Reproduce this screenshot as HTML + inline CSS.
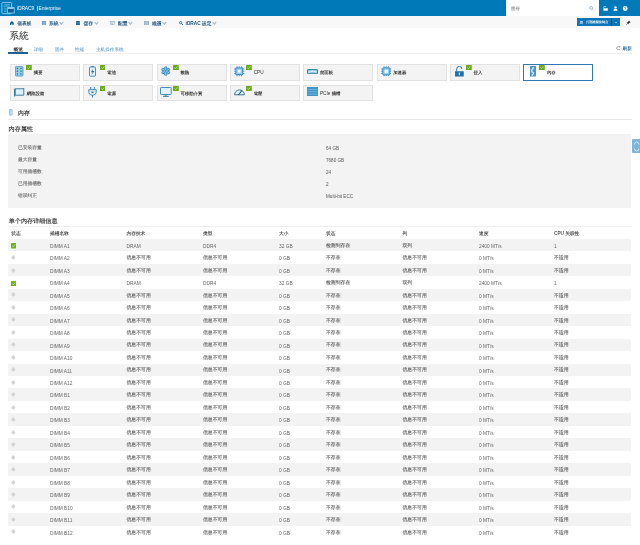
<!DOCTYPE html>
<html><head><meta charset="utf-8">
<style>
*{margin:0;padding:0;box-sizing:border-box}
html,body{width:640px;height:545px;overflow:hidden;background:#fff;font-family:"Liberation Sans",sans-serif;color:#444;position:relative}
.a{position:absolute;white-space:nowrap}
#hdr{position:absolute;left:0;top:0;width:640px;height:16px;background:#0079b8}
#nav{position:absolute;left:0;top:16px;width:640px;height:12.3px;background:#f8f8f8}
.brand{position:absolute;left:17px;top:5.3px;font-size:5px;color:#f0f6fb;line-height:7px}
.nv{position:absolute;top:20.6px;font-size:4.75px;line-height:6px;color:#1a5080;font-weight:bold}
.nv .k{font-weight:bold;color:#2a5c88}
.chev{display:inline-block;width:2.8px;height:2.8px;border-right:.4px solid #9fb5c9;border-bottom:.4px solid #9fb5c9;transform:rotate(45deg);margin-left:1.6px;position:relative;top:-1.2px}
#search{position:absolute;left:506px;top:0;width:93px;height:16px;background:#fff}
.title{position:absolute;left:9.3px;top:29.6px;font-size:9.75px;line-height:12px;color:#2a2a2a}
.tab{position:absolute;top:47px;font-size:4.6px;line-height:6px;color:#3d87c2}
.card{position:absolute;width:70px;height:16.3px;background:#f3f3f3;border:.7px solid #e2e2e2}
.card.sel{background:#fff;border:1.2px solid #3079b5}
.ci{position:absolute;line-height:0}
.ci svg{display:block}
.cl{position:absolute;font-size:4.7px;line-height:6px;color:#333;white-space:nowrap}
.cl .k{font-weight:bold;color:#383838;font-size:4.4px;position:relative;top:.2px}
.sec{position:absolute;font-size:5.9px;line-height:8px;color:#333;font-weight:bold}
.bold{font-weight:bold;font-size:6.1px;color:#444}
#props{position:absolute;left:8px;top:134.2px;width:622.8px;height:73.4px;background:#f3f3f3}
.pl{position:absolute;left:18px;margin-top:-.7px;font-size:4.75px;line-height:6px;color:#808080;font-weight:bold}
.pv{position:absolute;left:326px;font-size:4.6px;line-height:6px;color:#555}
.tr{position:absolute;left:8px;width:623px;height:12.47px}
.tr.st{background:#f3f3f3}
.tr>span{position:absolute;top:5px;font-size:4.8px;line-height:6px;color:#666}
.tr>span.z{color:#6e6e6e;font-weight:bold}
.th{position:absolute;top:230.6px;font-size:4.7px;line-height:6px;color:#555;font-weight:bold}
.c0{left:3px}.c1{left:42px}.c2{left:118.5px}.c3{left:195px}.c4{left:271px}.c5{left:318px}.c6{left:394.5px}.c7{left:471px}.c8{left:546px}
.k{font-size:100%;text-rendering:geometricPrecision}
.tr .k{font-size:4.85px;position:relative;top:-1.1px}
.pv .k{font-size:105%;position:relative;top:-.7px}
</style></head><body><div id="root" style="position:absolute;left:0;top:0;width:640px;height:545px;overflow:hidden;background:#fff;will-change:transform">
<div id="hdr"></div>
<svg class="a" style="left:1px;top:2px" width="14" height="12.5" viewBox="0 0 140 125"><rect x="9" y="4" width="97" height="113" rx="10" fill="none" stroke="#8fd6f6" stroke-width="9"/><path d="M28 28H86M28 42H86" stroke="#7fcdf0" stroke-width="7"/><path d="M28 62H56M28 78H56M28 94H56" stroke="#6cc0ea" stroke-width="7"/><rect x="66" y="56" width="66" height="54" fill="#105f92" stroke="#8fd6f6" stroke-width="8"/><path d="M70 63H128" stroke="#c9efff" stroke-width="9"/></svg>
<div class="brand" style="letter-spacing:-.17px">iDRAC9</div><div class="a" style="left:37.2px;top:5.7px;width:.6px;height:5.6px;background:#a9cfe8"></div><div class="brand" style="left:38.6px;letter-spacing:-.08px">Enterprise</div>
<div id="search"></div>
<div class="a" style="left:511px;top:6.1px;font-size:4.4px;line-height:6px;color:#9a9a9a;font-weight:bold"><span class="k">搜尋</span></div>
<svg class="a" style="left:589.2px;top:5.8px" width="5.2" height="4.6" viewBox="0 0 52 46"><circle cx="21" cy="19" r="14" fill="none" stroke="#8aa9c0" stroke-width="8"/><path d="M32 30L47 44" stroke="#8aa9c0" stroke-width="9"/></svg>
<svg class="a" style="left:602.5px;top:5.8px" width="25" height="5" viewBox="0 0 250 50"><path d="M8 22V12A10 10 0 0 1 28 12" stroke="#fff" stroke-width="6" fill="none"/><rect x="4" y="22" width="44" height="26" rx="3" fill="#fff"/><circle cx="125" cy="14" r="12" fill="#fff"/><path d="M104 48Q104 28 125 28Q146 28 146 48z" fill="#fff"/><circle cx="222" cy="25" r="24" fill="#fff"/><path d="M214 18Q214 10 222 10Q230 10 230 18Q230 24 222 26V31" stroke="#0079b8" stroke-width="6" fill="none"/><rect x="219" y="35" width="6" height="6" fill="#0079b8"/></svg>
<div id="nav"></div>
<svg class="a" style="left:10.2px;top:21.2px" width="3.8" height="4.2" viewBox="0 0 38 42"><path d="M19 0L38 17V42H24V28H14V42H0V17z" fill="#14628f"/></svg>
<div class="nv" style="left:17.3px"><span class="k">儀表板</span></div>
<svg class="a" style="left:42px;top:21px" width="4.2" height="4.4" viewBox="0 0 42 44"><path d="M0 0H42V44H0z" fill="#5d8fb8"/><path d="M6 10H36M6 22H36M6 34H36" stroke="#dfe9f2" stroke-width="5"/></svg>
<div class="nv" style="left:49px"><span class="k">系統</span><span class="chev"></span></div>
<svg class="a" style="left:75.9px;top:20.9px" width="3.9" height="4.3" viewBox="0 0 39 43"><rect x="0" y="0" width="39" height="43" rx="6" fill="#14628f"/><path d="M0 15H39M0 28H39" stroke="#9cc3dc" stroke-width="3"/></svg>
<div class="nv" style="left:83.5px"><span class="k">儲存</span><span class="chev"></span></div>
<svg class="a" style="left:110.2px;top:21px" width="4.8" height="4.3" viewBox="0 0 48 43"><rect x="2" y="2" width="44" height="30" fill="none" stroke="#7b9fbf" stroke-width="5"/><path d="M24 32V42M12 41H36" stroke="#7b9fbf" stroke-width="5"/><path d="M10 12H38M10 22H30" stroke="#7b9fbf" stroke-width="5"/></svg>
<div class="nv" style="left:118px"><span class="k">配置</span><span class="chev"></span></div>
<svg class="a" style="left:144.4px;top:21px" width="5" height="4.2" viewBox="0 0 50 42"><rect x="0" y="0" width="50" height="42" fill="#8aaac7"/><path d="M6 10H44M6 21H44M6 32H44" stroke="#e4edf5" stroke-width="5"/></svg>
<div class="nv" style="left:152px"><span class="k">維護</span><span class="chev"></span></div>
<svg class="a" style="left:178.7px;top:20.9px" width="4.4" height="4.4" viewBox="0 0 44 44"><circle cx="17" cy="17" r="12" fill="none" stroke="#14628f" stroke-width="8"/><path d="M26 26L41 41" stroke="#14628f" stroke-width="9"/></svg>
<div class="nv" style="left:185.6px">iDRAC <span class="k">設定</span><span class="chev"></span></div>
<div class="a" style="left:576.7px;top:18.3px;width:43.4px;height:8.2px;background:#0e75b8"></div>
<div class="a" style="left:610.9px;top:18.3px;width:.5px;height:8.2px;background:#0a5a90"></div>
<svg class="a" style="left:580px;top:21px" width="3.4" height="3.3" viewBox="0 0 34 33"><rect x="0" y="0" width="34" height="33" fill="#cfe4f3"/><path d="M5 9H29M5 17H29M5 25H29" stroke="#0e75b8" stroke-width="4"/></svg>
<div class="a" style="left:586.3px;top:20px;font-size:3.15px;line-height:5px;color:#e3eff8;font-weight:bold"><span class="k">打開虛擬控制台</span></div>
<svg class="a" style="left:614.6px;top:21.8px" width="2.2" height="1.6" viewBox="0 0 22 16"><path d="M0 2H22L11 15z" fill="#e3eff8"/></svg>
<svg class="a" style="left:625.8px;top:20.4px" width="5" height="5" viewBox="0 0 50 50"><path d="M28 4L46 22L38 24L26 36L24 44L6 26L14 24L26 12z" fill="#222"/><path d="M14 36L2 48" stroke="#222" stroke-width="5"/></svg>
<div class="title"><span class="k">系統</span></div>
<div class="tab" style="left:13.6px;color:#333;font-weight:bold"><span class="k">概览</span></div>
<div class="a" style="left:8px;top:52.2px;width:20px;height:1.8px;background:#1b5f94"></div>
<div class="a" style="left:28px;top:53.4px;width:604px;height:.5px;background:#f0f0f0"></div>
<div class="tab" style="left:33.7px"><span class="k">详细</span></div>
<div class="tab" style="left:55px"><span class="k">固件</span></div>
<div class="tab" style="left:75px"><span class="k">性能</span></div>
<div class="tab" style="left:96px"><span class="k">主机操作系统</span></div>
<svg class="a" style="left:616.2px;top:45.8px" width="4.6" height="4.2" viewBox="0 0 46 42"><path d="M38 12A17 17 0 1 0 40 28" stroke="#666" stroke-width="6" fill="none"/><path d="M30 2L44 4L40 17z" fill="#666"/></svg>
<div class="tab" style="left:622.6px;margin-top:-1.4px;color:#3f78a8;font-weight:bold"><span class="k">刷新</span></div>
<div class="card" style="left:10.00px;top:64.40px"></div>
<span class="ci" style="left:15.20px;top:66.20px"><svg width="8.4" height="10.5" viewBox="0 0 84 105"><rect x="4" y="4" width="76" height="97" rx="8" fill="#92cdec" stroke="#4c8fbd" stroke-width="8"/><g fill="#1f5f8c"><circle cx="24" cy="25" r="7"/><circle cx="60" cy="25" r="7"/><circle cx="24" cy="52" r="7"/><circle cx="60" cy="52" r="7"/><circle cx="24" cy="79" r="7"/><circle cx="60" cy="79" r="7"/></g></svg></span>
<span class="ci" style="left:26.20px;top:65.05px"><svg width="5.8" height="5.1" viewBox="0 0 58 51"><rect x="0" y="0" width="58" height="51" rx="4" fill="#6aa81c"/><path d="M15 27L25 36L43 15" stroke="#cdeea0" stroke-width="8" fill="none"/></svg></span>
<span class="cl" style="left:33.80px;top:70.00px"><span class="k">摘要</span></span>
<div class="card" style="left:83.30px;top:64.40px"></div>
<span class="ci" style="left:89.00px;top:66.00px"><svg width="7" height="10.75" viewBox="0 0 70 107.5"><rect x="22" y="0" width="26" height="10" fill="#3a82b3"/><rect x="5" y="10" width="60" height="92" rx="8" fill="#e4f3fb" stroke="#3a82b3" stroke-width="9"/><path d="M44 24L20 62H36L28 90L52 50H36z" fill="#1d5f8f"/></svg></span>
<span class="ci" style="left:99.50px;top:65.05px"><svg width="5.8" height="5.1" viewBox="0 0 58 51"><rect x="0" y="0" width="58" height="51" rx="4" fill="#6aa81c"/><path d="M15 27L25 36L43 15" stroke="#cdeea0" stroke-width="8" fill="none"/></svg></span>
<span class="cl" style="left:107.10px;top:70.00px"><span class="k">電池</span></span>
<div class="card" style="left:156.60px;top:64.40px"></div>
<span class="ci" style="left:161.00px;top:66.25px"><svg width="9.5" height="10" viewBox="0 0 95 100"><g fill="#3b8cc2"><circle cx="47.5" cy="18" r="16"/><circle cx="47.5" cy="82" r="16"/><circle cx="19.8" cy="34" r="16"/><circle cx="75.2" cy="34" r="16"/><circle cx="19.8" cy="66" r="16"/><circle cx="75.2" cy="66" r="16"/><circle cx="47.5" cy="50" r="24"/></g><g stroke="#d8f1fc" stroke-width="6"><path d="M47.5 6V94M9 28L86 72M9 72L86 28"/></g><circle cx="47.5" cy="50" r="8" fill="#1f6a9c"/></svg></span>
<span class="ci" style="left:172.80px;top:65.05px"><svg width="5.8" height="5.1" viewBox="0 0 58 51"><rect x="0" y="0" width="58" height="51" rx="4" fill="#6aa81c"/><path d="M15 27L25 36L43 15" stroke="#cdeea0" stroke-width="8" fill="none"/></svg></span>
<span class="cl" style="left:180.40px;top:70.00px"><span class="k">散熱</span></span>
<div class="card" style="left:229.90px;top:64.40px"></div>
<span class="ci" style="left:234.00px;top:66.00px"><svg width="10.5" height="10.5" viewBox="0 0 105 105"><g fill="#4796cc"><path d="M26 2h9v13h-9zM48 2h9v13h-9zM70 2h9v13h-9zM26 90h9v13h-9zM48 90h9v13h-9zM70 90h9v13h-9zM2 26h13v9H2zM2 48h13v9H2zM2 70h13v9H2zM90 26h13v9H90zM90 48h13v9H90zM90 70h13v9H90z"/></g><rect x="18" y="18" width="69" height="69" rx="8" fill="#8fcdf0" stroke="#4796cc" stroke-width="12"/><rect x="38" y="38" width="29" height="29" fill="#f4fbff"/></svg></span>
<span class="ci" style="left:246.10px;top:65.05px"><svg width="5.8" height="5.1" viewBox="0 0 58 51"><rect x="0" y="0" width="58" height="51" rx="4" fill="#6aa81c"/><path d="M15 27L25 36L43 15" stroke="#cdeea0" stroke-width="8" fill="none"/></svg></span>
<span class="cl" style="left:253.70px;top:70.00px">CPU</span>
<div class="card" style="left:303.20px;top:64.40px"></div>
<span class="ci" style="left:307.00px;top:68.80px"><svg width="11" height="5.2" viewBox="0 0 110 52"><rect x="5" y="5" width="100" height="42" rx="5" fill="#8cc8e0" stroke="#3a87a6" stroke-width="10"/><path d="M16 33C30 33 36 21 52 21S74 31 94 27" stroke="#fff" stroke-width="9" fill="none"/></svg></span>
<span class="cl" style="left:319.90px;top:70.00px"><span class="k">前面板</span></span>
<div class="card" style="left:376.50px;top:64.40px"></div>
<span class="ci" style="left:380.75px;top:65.60px"><svg width="10.6" height="10.6" viewBox="0 0 105 105"><g fill="#4796cc"><path d="M26 2h9v13h-9zM48 2h9v13h-9zM70 2h9v13h-9zM26 90h9v13h-9zM48 90h9v13h-9zM70 90h9v13h-9zM2 26h13v9H2zM2 48h13v9H2zM2 70h13v9H2zM90 26h13v9H90zM90 48h13v9H90zM90 70h13v9H90z"/></g><rect x="18" y="18" width="69" height="69" rx="10" fill="#8fcdf0" stroke="#4796cc" stroke-width="12"/><rect x="36" y="36" width="33" height="33" rx="4" fill="#f4fbff"/></svg></span>
<span class="cl" style="left:393.20px;top:70.00px"><span class="k">加速器</span></span>
<div class="card" style="left:449.80px;top:64.40px"></div>
<span class="ci" style="left:455.00px;top:66.00px"><svg width="8.75" height="10.5" viewBox="0 0 87.5 105"><path d="M17 52V30A26 26 0 0 1 69 30" stroke="#1a73b0" stroke-width="9" fill="none"/><rect x="0" y="52" width="87.5" height="53" rx="3" fill="#1a73b0"/><rect x="38" y="66" width="11" height="26" fill="#e6f4fb"/></svg></span>
<span class="ci" style="left:466.00px;top:65.05px"><svg width="5.8" height="5.1" viewBox="0 0 58 51"><rect x="0" y="0" width="58" height="51" rx="4" fill="#6aa81c"/><path d="M15 27L25 36L43 15" stroke="#cdeea0" stroke-width="8" fill="none"/></svg></span>
<span class="cl" style="left:473.60px;top:70.00px"><span class="k">侵入</span></span>
<div class="card sel" style="left:523.10px;top:64.40px"></div>
<span class="ci" style="left:530.00px;top:66.25px"><svg width="6" height="10.5" viewBox="0 0 60 105"><rect x="0" y="0" width="60" height="105" rx="3" fill="#4d95c6"/><path d="M30 10V30L18 38V58L34 66V80L22 88V98" stroke="#e8f6fc" stroke-width="11" fill="none"/></svg></span>
<span class="ci" style="left:539.30px;top:65.05px"><svg width="5.8" height="5.1" viewBox="0 0 58 51"><rect x="0" y="0" width="58" height="51" rx="4" fill="#6aa81c"/><path d="M15 27L25 36L43 15" stroke="#cdeea0" stroke-width="8" fill="none"/></svg></span>
<span class="cl" style="left:546.90px;top:70.00px"><span class="k">內存</span></span>
<div class="card" style="left:10.00px;top:85.00px"></div>
<span class="ci" style="left:14.00px;top:88.00px"><svg width="10.5" height="8.5" viewBox="0 0 105 85"><path d="M12 8H90L98 2V72H12z" fill="#dff0f8" stroke="#2d7095" stroke-width="9"/><path d="M6 6V85" stroke="#2d7095" stroke-width="10"/></svg></span>
<span class="cl" style="left:26.70px;top:90.60px"><span class="k">網路設備</span></span>
<div class="card" style="left:83.30px;top:85.00px"></div>
<span class="ci" style="left:88.00px;top:87.00px"><svg width="9" height="10.5" viewBox="0 0 90 105"><path d="M27 0V28M63 0V28" stroke="#3a7ea6" stroke-width="10"/><path d="M8 26H82V55Q82 78 45 84Q8 78 8 55z" fill="#dcf0f9" stroke="#3a7ea6" stroke-width="9"/><rect x="34" y="44" width="22" height="16" fill="#3a7ea6"/><path d="M45 82V105" stroke="#3a7ea6" stroke-width="10"/></svg></span>
<span class="ci" style="left:99.50px;top:85.65px"><svg width="5.8" height="5.1" viewBox="0 0 58 51"><rect x="0" y="0" width="58" height="51" rx="4" fill="#6aa81c"/><path d="M15 27L25 36L43 15" stroke="#cdeea0" stroke-width="8" fill="none"/></svg></span>
<span class="cl" style="left:107.10px;top:90.60px"><span class="k">電源</span></span>
<div class="card" style="left:156.60px;top:85.00px"></div>
<span class="ci" style="left:160.25px;top:87.00px"><svg width="11.75" height="9.75" viewBox="0 0 117.5 97.5"><rect x="5" y="5" width="107.5" height="70" rx="6" fill="#e2f3fb" stroke="#4a8fbf" stroke-width="10"/><path d="M58.75 75V90M30 93H88" stroke="#2d6f9b" stroke-width="10"/></svg></span>
<span class="ci" style="left:172.80px;top:85.65px"><svg width="5.8" height="5.1" viewBox="0 0 58 51"><rect x="0" y="0" width="58" height="51" rx="4" fill="#6aa81c"/><path d="M15 27L25 36L43 15" stroke="#cdeea0" stroke-width="8" fill="none"/></svg></span>
<span class="cl" style="left:180.40px;top:90.60px"><span class="k">可移動介質</span></span>
<div class="card" style="left:229.90px;top:85.00px"></div>
<span class="ci" style="left:234.00px;top:88.25px"><svg width="11" height="7.5" viewBox="0 0 110 75"><path d="M6 68A49 49 0 0 1 104 68z" fill="#dff1fa" stroke="#3d7898" stroke-width="10" stroke-linejoin="round"/><path d="M44 70L80 24" stroke="#1f5f8c" stroke-width="11"/></svg></span>
<span class="ci" style="left:246.10px;top:85.65px"><svg width="5.8" height="5.1" viewBox="0 0 58 51"><rect x="0" y="0" width="58" height="51" rx="4" fill="#6aa81c"/><path d="M15 27L25 36L43 15" stroke="#cdeea0" stroke-width="8" fill="none"/></svg></span>
<span class="cl" style="left:253.70px;top:90.60px"><span class="k">電壓</span></span>
<div class="card" style="left:303.20px;top:85.00px"></div>
<span class="ci" style="left:307.00px;top:86.80px"><svg width="11.3" height="9.7" viewBox="0 0 113 97"><rect x="0" y="0" width="113" height="97" rx="3" fill="#3d95c8"/><path d="M8 24H105M8 48H105M8 72H105" stroke="#9fd6f2" stroke-width="5"/></svg></span>
<span class="cl" style="left:319.90px;top:90.60px">PCIe <span class="k">插槽</span></span>
<svg class="a" style="left:9.3px;top:109.3px" width="3.4" height="6.4" viewBox="0 0 34 64"><rect x="3" y="3" width="28" height="58" rx="3" fill="#e9f6fc" stroke="#4f97c8" stroke-width="6"/><path d="M17 10V24L11 30V44L19 50V56" stroke="#4f97c8" stroke-width="4" fill="none"/></svg>
<div class="sec" style="left:18px;top:109px"><span class="k">内存</span></div>
<div class="a" style="left:8px;top:119px;width:623.5px;height:.5px;background:#e8e8e8"></div>
<div class="sec bold" style="left:8.6px;top:124.7px"><span class="k">内存属性</span></div>
<div id="props"></div>
<div class="pl" style="top:145.5px"><span class="k">已安装容量</span></div><div class="pv" style="top:145.5px">64 GB</div>
<div class="pl" style="top:157.8px"><span class="k">最大容量</span></div><div class="pv" style="top:157.8px">7680 GB</div>
<div class="pl" style="top:169.7px"><span class="k">可用插槽数</span></div><div class="pv" style="top:169.7px">24</div>
<div class="pl" style="top:181.7px"><span class="k">已用插槽数</span></div><div class="pv" style="top:181.7px">2</div>
<div class="pl" style="top:193.6px"><span class="k">错误纠正</span></div><div class="pv" style="top:193.6px">Multi-bit ECC</div>
<div class="a" style="left:632px;top:138.8px;width:8px;height:14.2px;background:#7db6da;border-radius:1px 0 0 1px"></div>
<svg class="a" style="left:632.5px;top:139.5px" width="7.5" height="13" viewBox="0 0 75 130"><path d="M15 45Q15 20 37 20Q59 20 59 45M15 85Q15 110 37 110Q59 110 59 85" stroke="#d4ecf8" stroke-width="9" fill="none"/></svg>
<div class="sec bold" style="left:8.75px;top:216.5px"><span class="k">单个内存详细信息</span></div>
<div class="a" style="left:8px;top:226px;width:624px;height:.5px;background:#eeeeee"></div>
<div class="th" style="left:11.2px"><span class="k">状态</span></div>
<div class="th" style="left:50px"><span class="k">插槽名称</span></div>
<div class="th" style="left:126.5px"><span class="k">内存技术</span></div>
<div class="th" style="left:203px"><span class="k">类型</span></div>
<div class="th" style="left:279px"><span class="k">大小</span></div>
<div class="th" style="left:326px"><span class="k">状态</span></div>
<div class="th" style="left:402.5px"><span class="k">列</span></div>
<div class="th" style="left:479px"><span class="k">速度</span></div>
<div class="th" style="left:554px">CPU <span class="k">关联性</span></div>
<div class="tr st" style="top:238.80px"><span class="c0"><svg width="5.4" height="5.4" viewBox="0 0 54 54" style="display:block;margin-top:-.6px"><rect width="54" height="54" rx="4" fill="#6cb51d"/><path d="M14 28L23 37L41 17" stroke="#d9f2b0" stroke-width="7" fill="none"/></svg></span><span class="c1">DIMM A1</span><span class="c2">DRAM</span><span class="c3">DDR4</span><span class="c4">32 GB</span><span class="c5 z"><span class="k">检测到存在</span></span><span class="c6 z"><span class="k">双列</span></span><span class="c7">2400 MT/s</span><span class="c8">1</span></div>
<div class="tr" style="top:251.27px"><span class="c0"><svg width="4.6" height="5" viewBox="0 0 46 50" style="display:block;margin-left:.3px;margin-top:-1.2px"><path d="M23 3Q25 3 27 5L41 21Q44 25 41 29L27 45Q23 49 19 45L5 29Q2 25 5 21L19 5Q21 3 23 3z" fill="#d2d2d2"/><circle cx="23" cy="25" r="5" fill="#dadada"/></svg></span><span class="c1">DIMM A2</span><span class="c2 z"><span class="k">信息不可用</span></span><span class="c3 z"><span class="k">信息不可用</span></span><span class="c4">0 GB</span><span class="c5 z"><span class="k">不存在</span></span><span class="c6 z"><span class="k">信息不可用</span></span><span class="c7">0 MT/s</span><span class="c8 z"><span class="k">不适用</span></span></div>
<div class="tr st" style="top:263.74px"><span class="c0"><svg width="4.6" height="5" viewBox="0 0 46 50" style="display:block;margin-left:.3px;margin-top:-1.2px"><path d="M23 3Q25 3 27 5L41 21Q44 25 41 29L27 45Q23 49 19 45L5 29Q2 25 5 21L19 5Q21 3 23 3z" fill="#d2d2d2"/><circle cx="23" cy="25" r="5" fill="#dadada"/></svg></span><span class="c1">DIMM A3</span><span class="c2 z"><span class="k">信息不可用</span></span><span class="c3 z"><span class="k">信息不可用</span></span><span class="c4">0 GB</span><span class="c5 z"><span class="k">不存在</span></span><span class="c6 z"><span class="k">信息不可用</span></span><span class="c7">0 MT/s</span><span class="c8 z"><span class="k">不适用</span></span></div>
<div class="tr" style="top:276.21px"><span class="c0"><svg width="5.4" height="5.4" viewBox="0 0 54 54" style="display:block;margin-top:-.6px"><rect width="54" height="54" rx="4" fill="#6cb51d"/><path d="M14 28L23 37L41 17" stroke="#d9f2b0" stroke-width="7" fill="none"/></svg></span><span class="c1">DIMM A4</span><span class="c2">DRAM</span><span class="c3">DDR4</span><span class="c4">32 GB</span><span class="c5 z"><span class="k">检测到存在</span></span><span class="c6 z"><span class="k">双列</span></span><span class="c7">2400 MT/s</span><span class="c8">1</span></div>
<div class="tr st" style="top:288.68px"><span class="c0"><svg width="4.6" height="5" viewBox="0 0 46 50" style="display:block;margin-left:.3px;margin-top:-1.2px"><path d="M23 3Q25 3 27 5L41 21Q44 25 41 29L27 45Q23 49 19 45L5 29Q2 25 5 21L19 5Q21 3 23 3z" fill="#d2d2d2"/><circle cx="23" cy="25" r="5" fill="#dadada"/></svg></span><span class="c1">DIMM A5</span><span class="c2 z"><span class="k">信息不可用</span></span><span class="c3 z"><span class="k">信息不可用</span></span><span class="c4">0 GB</span><span class="c5 z"><span class="k">不存在</span></span><span class="c6 z"><span class="k">信息不可用</span></span><span class="c7">0 MT/s</span><span class="c8 z"><span class="k">不适用</span></span></div>
<div class="tr" style="top:301.15px"><span class="c0"><svg width="4.6" height="5" viewBox="0 0 46 50" style="display:block;margin-left:.3px;margin-top:-1.2px"><path d="M23 3Q25 3 27 5L41 21Q44 25 41 29L27 45Q23 49 19 45L5 29Q2 25 5 21L19 5Q21 3 23 3z" fill="#d2d2d2"/><circle cx="23" cy="25" r="5" fill="#dadada"/></svg></span><span class="c1">DIMM A6</span><span class="c2 z"><span class="k">信息不可用</span></span><span class="c3 z"><span class="k">信息不可用</span></span><span class="c4">0 GB</span><span class="c5 z"><span class="k">不存在</span></span><span class="c6 z"><span class="k">信息不可用</span></span><span class="c7">0 MT/s</span><span class="c8 z"><span class="k">不适用</span></span></div>
<div class="tr st" style="top:313.62px"><span class="c0"><svg width="4.6" height="5" viewBox="0 0 46 50" style="display:block;margin-left:.3px;margin-top:-1.2px"><path d="M23 3Q25 3 27 5L41 21Q44 25 41 29L27 45Q23 49 19 45L5 29Q2 25 5 21L19 5Q21 3 23 3z" fill="#d2d2d2"/><circle cx="23" cy="25" r="5" fill="#dadada"/></svg></span><span class="c1">DIMM A7</span><span class="c2 z"><span class="k">信息不可用</span></span><span class="c3 z"><span class="k">信息不可用</span></span><span class="c4">0 GB</span><span class="c5 z"><span class="k">不存在</span></span><span class="c6 z"><span class="k">信息不可用</span></span><span class="c7">0 MT/s</span><span class="c8 z"><span class="k">不适用</span></span></div>
<div class="tr" style="top:326.09px"><span class="c0"><svg width="4.6" height="5" viewBox="0 0 46 50" style="display:block;margin-left:.3px;margin-top:-1.2px"><path d="M23 3Q25 3 27 5L41 21Q44 25 41 29L27 45Q23 49 19 45L5 29Q2 25 5 21L19 5Q21 3 23 3z" fill="#d2d2d2"/><circle cx="23" cy="25" r="5" fill="#dadada"/></svg></span><span class="c1">DIMM A8</span><span class="c2 z"><span class="k">信息不可用</span></span><span class="c3 z"><span class="k">信息不可用</span></span><span class="c4">0 GB</span><span class="c5 z"><span class="k">不存在</span></span><span class="c6 z"><span class="k">信息不可用</span></span><span class="c7">0 MT/s</span><span class="c8 z"><span class="k">不适用</span></span></div>
<div class="tr st" style="top:338.56px"><span class="c0"><svg width="4.6" height="5" viewBox="0 0 46 50" style="display:block;margin-left:.3px;margin-top:-1.2px"><path d="M23 3Q25 3 27 5L41 21Q44 25 41 29L27 45Q23 49 19 45L5 29Q2 25 5 21L19 5Q21 3 23 3z" fill="#d2d2d2"/><circle cx="23" cy="25" r="5" fill="#dadada"/></svg></span><span class="c1">DIMM A9</span><span class="c2 z"><span class="k">信息不可用</span></span><span class="c3 z"><span class="k">信息不可用</span></span><span class="c4">0 GB</span><span class="c5 z"><span class="k">不存在</span></span><span class="c6 z"><span class="k">信息不可用</span></span><span class="c7">0 MT/s</span><span class="c8 z"><span class="k">不适用</span></span></div>
<div class="tr" style="top:351.03px"><span class="c0"><svg width="4.6" height="5" viewBox="0 0 46 50" style="display:block;margin-left:.3px;margin-top:-1.2px"><path d="M23 3Q25 3 27 5L41 21Q44 25 41 29L27 45Q23 49 19 45L5 29Q2 25 5 21L19 5Q21 3 23 3z" fill="#d2d2d2"/><circle cx="23" cy="25" r="5" fill="#dadada"/></svg></span><span class="c1">DIMM A10</span><span class="c2 z"><span class="k">信息不可用</span></span><span class="c3 z"><span class="k">信息不可用</span></span><span class="c4">0 GB</span><span class="c5 z"><span class="k">不存在</span></span><span class="c6 z"><span class="k">信息不可用</span></span><span class="c7">0 MT/s</span><span class="c8 z"><span class="k">不适用</span></span></div>
<div class="tr st" style="top:363.50px"><span class="c0"><svg width="4.6" height="5" viewBox="0 0 46 50" style="display:block;margin-left:.3px;margin-top:-1.2px"><path d="M23 3Q25 3 27 5L41 21Q44 25 41 29L27 45Q23 49 19 45L5 29Q2 25 5 21L19 5Q21 3 23 3z" fill="#d2d2d2"/><circle cx="23" cy="25" r="5" fill="#dadada"/></svg></span><span class="c1">DIMM A11</span><span class="c2 z"><span class="k">信息不可用</span></span><span class="c3 z"><span class="k">信息不可用</span></span><span class="c4">0 GB</span><span class="c5 z"><span class="k">不存在</span></span><span class="c6 z"><span class="k">信息不可用</span></span><span class="c7">0 MT/s</span><span class="c8 z"><span class="k">不适用</span></span></div>
<div class="tr" style="top:375.97px"><span class="c0"><svg width="4.6" height="5" viewBox="0 0 46 50" style="display:block;margin-left:.3px;margin-top:-1.2px"><path d="M23 3Q25 3 27 5L41 21Q44 25 41 29L27 45Q23 49 19 45L5 29Q2 25 5 21L19 5Q21 3 23 3z" fill="#d2d2d2"/><circle cx="23" cy="25" r="5" fill="#dadada"/></svg></span><span class="c1">DIMM A12</span><span class="c2 z"><span class="k">信息不可用</span></span><span class="c3 z"><span class="k">信息不可用</span></span><span class="c4">0 GB</span><span class="c5 z"><span class="k">不存在</span></span><span class="c6 z"><span class="k">信息不可用</span></span><span class="c7">0 MT/s</span><span class="c8 z"><span class="k">不适用</span></span></div>
<div class="tr st" style="top:388.44px"><span class="c0"><svg width="4.6" height="5" viewBox="0 0 46 50" style="display:block;margin-left:.3px;margin-top:-1.2px"><path d="M23 3Q25 3 27 5L41 21Q44 25 41 29L27 45Q23 49 19 45L5 29Q2 25 5 21L19 5Q21 3 23 3z" fill="#d2d2d2"/><circle cx="23" cy="25" r="5" fill="#dadada"/></svg></span><span class="c1">DIMM B1</span><span class="c2 z"><span class="k">信息不可用</span></span><span class="c3 z"><span class="k">信息不可用</span></span><span class="c4">0 GB</span><span class="c5 z"><span class="k">不存在</span></span><span class="c6 z"><span class="k">信息不可用</span></span><span class="c7">0 MT/s</span><span class="c8 z"><span class="k">不适用</span></span></div>
<div class="tr" style="top:400.91px"><span class="c0"><svg width="4.6" height="5" viewBox="0 0 46 50" style="display:block;margin-left:.3px;margin-top:-1.2px"><path d="M23 3Q25 3 27 5L41 21Q44 25 41 29L27 45Q23 49 19 45L5 29Q2 25 5 21L19 5Q21 3 23 3z" fill="#d2d2d2"/><circle cx="23" cy="25" r="5" fill="#dadada"/></svg></span><span class="c1">DIMM B2</span><span class="c2 z"><span class="k">信息不可用</span></span><span class="c3 z"><span class="k">信息不可用</span></span><span class="c4">0 GB</span><span class="c5 z"><span class="k">不存在</span></span><span class="c6 z"><span class="k">信息不可用</span></span><span class="c7">0 MT/s</span><span class="c8 z"><span class="k">不适用</span></span></div>
<div class="tr st" style="top:413.38px"><span class="c0"><svg width="4.6" height="5" viewBox="0 0 46 50" style="display:block;margin-left:.3px;margin-top:-1.2px"><path d="M23 3Q25 3 27 5L41 21Q44 25 41 29L27 45Q23 49 19 45L5 29Q2 25 5 21L19 5Q21 3 23 3z" fill="#d2d2d2"/><circle cx="23" cy="25" r="5" fill="#dadada"/></svg></span><span class="c1">DIMM B3</span><span class="c2 z"><span class="k">信息不可用</span></span><span class="c3 z"><span class="k">信息不可用</span></span><span class="c4">0 GB</span><span class="c5 z"><span class="k">不存在</span></span><span class="c6 z"><span class="k">信息不可用</span></span><span class="c7">0 MT/s</span><span class="c8 z"><span class="k">不适用</span></span></div>
<div class="tr" style="top:425.85px"><span class="c0"><svg width="4.6" height="5" viewBox="0 0 46 50" style="display:block;margin-left:.3px;margin-top:-1.2px"><path d="M23 3Q25 3 27 5L41 21Q44 25 41 29L27 45Q23 49 19 45L5 29Q2 25 5 21L19 5Q21 3 23 3z" fill="#d2d2d2"/><circle cx="23" cy="25" r="5" fill="#dadada"/></svg></span><span class="c1">DIMM B4</span><span class="c2 z"><span class="k">信息不可用</span></span><span class="c3 z"><span class="k">信息不可用</span></span><span class="c4">0 GB</span><span class="c5 z"><span class="k">不存在</span></span><span class="c6 z"><span class="k">信息不可用</span></span><span class="c7">0 MT/s</span><span class="c8 z"><span class="k">不适用</span></span></div>
<div class="tr st" style="top:438.32px"><span class="c0"><svg width="4.6" height="5" viewBox="0 0 46 50" style="display:block;margin-left:.3px;margin-top:-1.2px"><path d="M23 3Q25 3 27 5L41 21Q44 25 41 29L27 45Q23 49 19 45L5 29Q2 25 5 21L19 5Q21 3 23 3z" fill="#d2d2d2"/><circle cx="23" cy="25" r="5" fill="#dadada"/></svg></span><span class="c1">DIMM B5</span><span class="c2 z"><span class="k">信息不可用</span></span><span class="c3 z"><span class="k">信息不可用</span></span><span class="c4">0 GB</span><span class="c5 z"><span class="k">不存在</span></span><span class="c6 z"><span class="k">信息不可用</span></span><span class="c7">0 MT/s</span><span class="c8 z"><span class="k">不适用</span></span></div>
<div class="tr" style="top:450.79px"><span class="c0"><svg width="4.6" height="5" viewBox="0 0 46 50" style="display:block;margin-left:.3px;margin-top:-1.2px"><path d="M23 3Q25 3 27 5L41 21Q44 25 41 29L27 45Q23 49 19 45L5 29Q2 25 5 21L19 5Q21 3 23 3z" fill="#d2d2d2"/><circle cx="23" cy="25" r="5" fill="#dadada"/></svg></span><span class="c1">DIMM B6</span><span class="c2 z"><span class="k">信息不可用</span></span><span class="c3 z"><span class="k">信息不可用</span></span><span class="c4">0 GB</span><span class="c5 z"><span class="k">不存在</span></span><span class="c6 z"><span class="k">信息不可用</span></span><span class="c7">0 MT/s</span><span class="c8 z"><span class="k">不适用</span></span></div>
<div class="tr st" style="top:463.26px"><span class="c0"><svg width="4.6" height="5" viewBox="0 0 46 50" style="display:block;margin-left:.3px;margin-top:-1.2px"><path d="M23 3Q25 3 27 5L41 21Q44 25 41 29L27 45Q23 49 19 45L5 29Q2 25 5 21L19 5Q21 3 23 3z" fill="#d2d2d2"/><circle cx="23" cy="25" r="5" fill="#dadada"/></svg></span><span class="c1">DIMM B7</span><span class="c2 z"><span class="k">信息不可用</span></span><span class="c3 z"><span class="k">信息不可用</span></span><span class="c4">0 GB</span><span class="c5 z"><span class="k">不存在</span></span><span class="c6 z"><span class="k">信息不可用</span></span><span class="c7">0 MT/s</span><span class="c8 z"><span class="k">不适用</span></span></div>
<div class="tr" style="top:475.73px"><span class="c0"><svg width="4.6" height="5" viewBox="0 0 46 50" style="display:block;margin-left:.3px;margin-top:-1.2px"><path d="M23 3Q25 3 27 5L41 21Q44 25 41 29L27 45Q23 49 19 45L5 29Q2 25 5 21L19 5Q21 3 23 3z" fill="#d2d2d2"/><circle cx="23" cy="25" r="5" fill="#dadada"/></svg></span><span class="c1">DIMM B8</span><span class="c2 z"><span class="k">信息不可用</span></span><span class="c3 z"><span class="k">信息不可用</span></span><span class="c4">0 GB</span><span class="c5 z"><span class="k">不存在</span></span><span class="c6 z"><span class="k">信息不可用</span></span><span class="c7">0 MT/s</span><span class="c8 z"><span class="k">不适用</span></span></div>
<div class="tr st" style="top:488.20px"><span class="c0"><svg width="4.6" height="5" viewBox="0 0 46 50" style="display:block;margin-left:.3px;margin-top:-1.2px"><path d="M23 3Q25 3 27 5L41 21Q44 25 41 29L27 45Q23 49 19 45L5 29Q2 25 5 21L19 5Q21 3 23 3z" fill="#d2d2d2"/><circle cx="23" cy="25" r="5" fill="#dadada"/></svg></span><span class="c1">DIMM B9</span><span class="c2 z"><span class="k">信息不可用</span></span><span class="c3 z"><span class="k">信息不可用</span></span><span class="c4">0 GB</span><span class="c5 z"><span class="k">不存在</span></span><span class="c6 z"><span class="k">信息不可用</span></span><span class="c7">0 MT/s</span><span class="c8 z"><span class="k">不适用</span></span></div>
<div class="tr" style="top:500.67px"><span class="c0"><svg width="4.6" height="5" viewBox="0 0 46 50" style="display:block;margin-left:.3px;margin-top:-1.2px"><path d="M23 3Q25 3 27 5L41 21Q44 25 41 29L27 45Q23 49 19 45L5 29Q2 25 5 21L19 5Q21 3 23 3z" fill="#d2d2d2"/><circle cx="23" cy="25" r="5" fill="#dadada"/></svg></span><span class="c1">DIMM B10</span><span class="c2 z"><span class="k">信息不可用</span></span><span class="c3 z"><span class="k">信息不可用</span></span><span class="c4">0 GB</span><span class="c5 z"><span class="k">不存在</span></span><span class="c6 z"><span class="k">信息不可用</span></span><span class="c7">0 MT/s</span><span class="c8 z"><span class="k">不适用</span></span></div>
<div class="tr st" style="top:513.14px"><span class="c0"><svg width="4.6" height="5" viewBox="0 0 46 50" style="display:block;margin-left:.3px;margin-top:-1.2px"><path d="M23 3Q25 3 27 5L41 21Q44 25 41 29L27 45Q23 49 19 45L5 29Q2 25 5 21L19 5Q21 3 23 3z" fill="#d2d2d2"/><circle cx="23" cy="25" r="5" fill="#dadada"/></svg></span><span class="c1">DIMM B11</span><span class="c2 z"><span class="k">信息不可用</span></span><span class="c3 z"><span class="k">信息不可用</span></span><span class="c4">0 GB</span><span class="c5 z"><span class="k">不存在</span></span><span class="c6 z"><span class="k">信息不可用</span></span><span class="c7">0 MT/s</span><span class="c8 z"><span class="k">不适用</span></span></div>
<div class="tr" style="top:525.61px"><span class="c0"><svg width="4.6" height="5" viewBox="0 0 46 50" style="display:block;margin-left:.3px;margin-top:-1.2px"><path d="M23 3Q25 3 27 5L41 21Q44 25 41 29L27 45Q23 49 19 45L5 29Q2 25 5 21L19 5Q21 3 23 3z" fill="#d2d2d2"/><circle cx="23" cy="25" r="5" fill="#dadada"/></svg></span><span class="c1">DIMM B12</span><span class="c2 z"><span class="k">信息不可用</span></span><span class="c3 z"><span class="k">信息不可用</span></span><span class="c4">0 GB</span><span class="c5 z"><span class="k">不存在</span></span><span class="c6 z"><span class="k">信息不可用</span></span><span class="c7">0 MT/s</span><span class="c8 z"><span class="k">不适用</span></span></div>
</div></body></html>
